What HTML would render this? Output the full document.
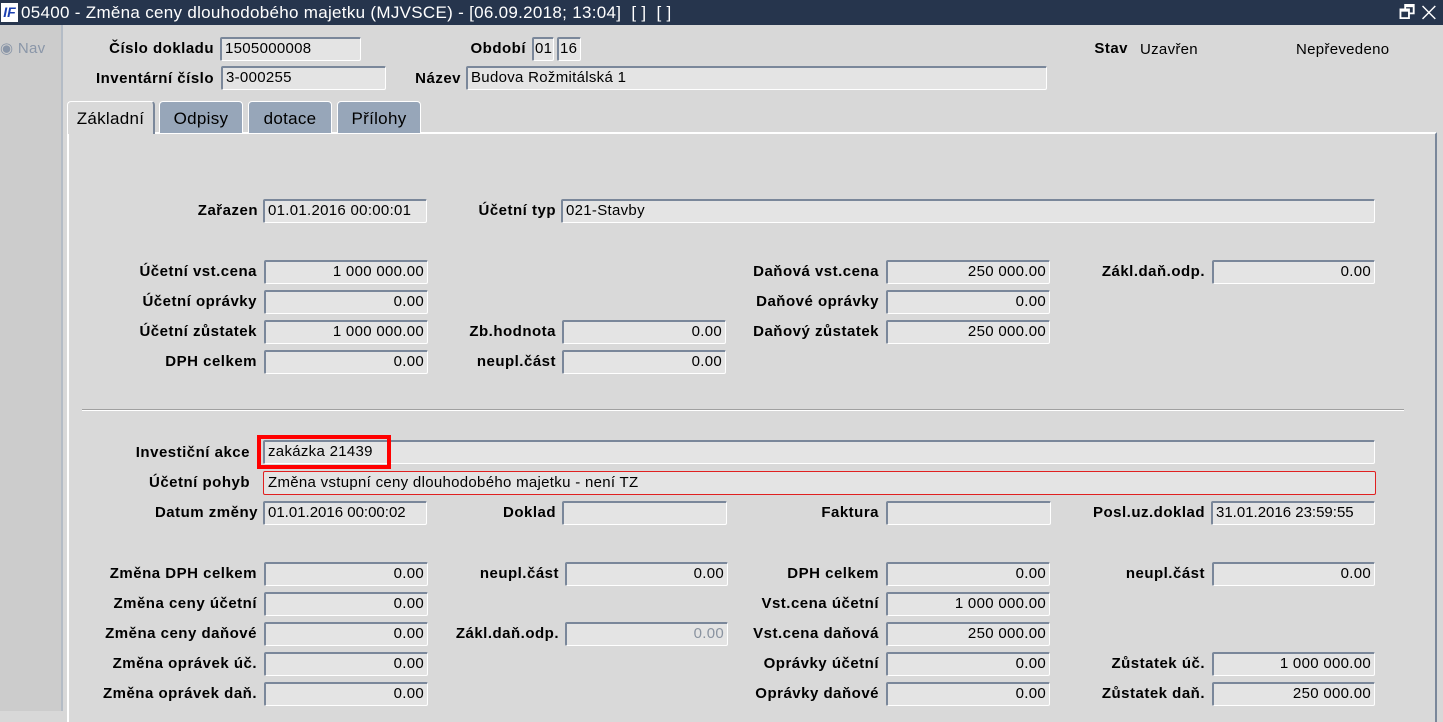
<!DOCTYPE html>
<html><head><meta charset="utf-8"><style>
*{margin:0;padding:0;box-sizing:border-box}
body{width:1443px;height:711px;overflow:hidden;background:#d8d8d8;font-family:"Liberation Sans",Arial,sans-serif;font-size:15px;letter-spacing:0.3px;color:#000;position:relative}
#tb{position:absolute;left:0;top:0;width:1443px;height:25px;background:#26354d;color:#fff;font-size:17px;letter-spacing:0.3px;line-height:25px;padding-left:21px}
#logo{position:absolute;left:1px;top:3px;width:17px;height:19px;background:#fff;color:#1a3fb0;font-weight:bold;font-style:italic;font-size:14px;line-height:19px;text-align:center;letter-spacing:0}
#strip{position:absolute;left:0;top:25px;width:63px;height:686px;background:#cccccc;border-right:2px solid #b4bcc6}
.l{position:absolute;width:220px;text-align:right;font-weight:bold;line-height:24px;white-space:nowrap;letter-spacing:0.5px}
.f{position:absolute;height:24px;background:#e4e4e4;border:1px solid #fff;border-top:2px solid #7a879a;border-left:2px solid #7a879a;line-height:20px;padding:0 3px;white-space:nowrap;overflow:hidden;border-radius:2px}
.r{text-align:right}
.t{position:absolute;top:101px;height:32px;background:#97a6b9;border-radius:4px 4px 0 0;text-align:center;line-height:34px;font-size:17px;border:1px solid #fff;border-bottom:none}
#panel{position:absolute;left:67px;top:132px;width:1370px;height:590px;background:#d9d9d9;border-top:2px solid #fff;border-left:2px solid #fff;border-right:2px solid #7a879a}
</style></head><body>
<div id="tb"><div id="logo">IF</div>05400 - Změna ceny dlouhodobého majetku (MJVSCE) - [06.09.2018; 13:04]&nbsp; [ ]&nbsp; [ ]<span style="position:absolute;right:6px;top:0;font-size:18px">🗗 ✕</span></div>
<div id="strip"><span style="position:absolute;left:0;top:14px;color:#8a96a8;font-size:15px">◉ Nav</span></div>

<div class="l" style="left:-6px;top:37px">Číslo dokladu</div>
<div class="f" style="left:220px;top:37px;width:141px">1505000008</div>
<div class="l" style="left:306px;top:37px">Období</div>
<div class="f" style="left:532px;top:37px;width:22px;padding:0 1px">01</div>
<div class="f" style="left:557px;top:37px;width:24px;padding:0 1px">16</div>
<div class="l" style="left:908px;top:37px">Stav</div>
<div style="position:absolute;left:1140px;top:41px">Uzavřen</div>
<div style="position:absolute;left:1296px;top:41px">Nepřevedeno</div>
<div class="l" style="left:-6px;top:67px">Inventární číslo</div>
<div class="f" style="left:221px;top:66px;width:165px">3-000255</div>
<div class="l" style="left:241px;top:67px">Název</div>
<div class="f" style="left:466px;top:66px;width:581px">Budova Rožmitálská 1</div>

<div id="panel"></div>
<div class="t" style="left:67px;width:88px;background:#d9d9d9;height:33px;border-right:2px solid #7a879a">Základní</div>
<div class="t" style="left:159px;width:84px">Odpisy</div>
<div class="t" style="left:248px;width:84px">dotace</div>
<div class="t" style="left:337px;width:84px">Přílohy</div>

<div class="l" style="left:38px;top:199px">Zařazen</div>
<div class="f" style="left:263px;top:199px;width:164px">01.01.2016 00:00:01</div>
<div class="l" style="left:336px;top:199px">Účetní typ</div>
<div class="f" style="left:561px;top:199px;width:814px">021-Stavby</div>

<div class="l" style="left:37px;top:260px">Účetní vst.cena</div>
<div class="f r" style="left:264px;top:260px;width:164px">1 000 000.00</div>
<div class="l" style="left:659px;top:260px">Daňová vst.cena</div>
<div class="f r" style="left:886px;top:260px;width:164px">250 000.00</div>
<div class="l" style="left:985px;top:260px">Zákl.daň.odp.</div>
<div class="f r" style="left:1212px;top:260px;width:163px">0.00</div>

<div class="l" style="left:37px;top:290px">Účetní oprávky</div>
<div class="f r" style="left:264px;top:290px;width:164px">0.00</div>
<div class="l" style="left:659px;top:290px">Daňové oprávky</div>
<div class="f r" style="left:886px;top:290px;width:164px">0.00</div>

<div class="l" style="left:37px;top:320px">Účetní zůstatek</div>
<div class="f r" style="left:264px;top:320px;width:164px">1 000 000.00</div>
<div class="l" style="left:336px;top:320px">Zb.hodnota</div>
<div class="f r" style="left:562px;top:320px;width:164px">0.00</div>
<div class="l" style="left:659px;top:320px">Daňový zůstatek</div>
<div class="f r" style="left:886px;top:320px;width:164px">250 000.00</div>

<div class="l" style="left:37px;top:350px">DPH celkem</div>
<div class="f r" style="left:264px;top:350px;width:164px">0.00</div>
<div class="l" style="left:336px;top:350px">neupl.část</div>
<div class="f r" style="left:562px;top:350px;width:164px">0.00</div>

<div style="position:absolute;left:82px;top:409px;width:1322px;height:2px;background:#a0a0a0;border-bottom:1px solid #fff"></div>

<div class="l" style="left:30px;top:441px">Investiční akce</div>
<div class="f" style="left:263px;top:440px;width:1112px;padding-left:3px">zakázka 21439</div>
<div style="position:absolute;left:257px;top:435px;width:134px;height:34px;border:4px solid #f00"></div>
<div class="l" style="left:30px;top:471px">Účetní pohyb</div>
<div class="f" style="left:263px;top:471px;width:1113px;border:1px solid #e02020;padding-left:4px;line-height:22px">Změna vstupní ceny dlouhodobého majetku - není TZ</div>

<div class="l" style="left:38px;top:501px">Datum změny</div>
<div class="f" style="left:263px;top:501px;width:164px;letter-spacing:0">01.01.2016 00:00:02</div>
<div class="l" style="left:336px;top:501px">Doklad</div>
<div class="f" style="left:562px;top:501px;width:165px"></div>
<div class="l" style="left:659px;top:501px">Faktura</div>
<div class="f" style="left:886px;top:501px;width:165px"></div>
<div class="l" style="left:985px;top:501px">Posl.uz.doklad</div>
<div class="f" style="left:1211px;top:501px;width:164px;letter-spacing:0">31.01.2016 23:59:55</div>

<div class="l" style="left:37px;top:562px">Změna DPH celkem</div>
<div class="f r" style="left:264px;top:562px;width:164px">0.00</div>
<div class="l" style="left:339px;top:562px">neupl.část</div>
<div class="f r" style="left:565px;top:562px;width:163px">0.00</div>
<div class="l" style="left:659px;top:562px">DPH celkem</div>
<div class="f r" style="left:886px;top:562px;width:164px">0.00</div>
<div class="l" style="left:985px;top:562px">neupl.část</div>
<div class="f r" style="left:1212px;top:562px;width:163px">0.00</div>

<div class="l" style="left:37px;top:592px">Změna ceny účetní</div>
<div class="f r" style="left:264px;top:592px;width:164px">0.00</div>
<div class="l" style="left:659px;top:592px">Vst.cena účetní</div>
<div class="f r" style="left:886px;top:592px;width:164px">1 000 000.00</div>

<div class="l" style="left:37px;top:622px">Změna ceny daňové</div>
<div class="f r" style="left:264px;top:622px;width:164px">0.00</div>
<div class="l" style="left:339px;top:622px">Zákl.daň.odp.</div>
<div class="f r" style="left:565px;top:622px;width:163px;color:#8a93a0">0.00</div>
<div class="l" style="left:659px;top:622px">Vst.cena daňová</div>
<div class="f r" style="left:886px;top:622px;width:164px">250 000.00</div>

<div class="l" style="left:37px;top:652px">Změna oprávek úč.</div>
<div class="f r" style="left:264px;top:652px;width:164px">0.00</div>
<div class="l" style="left:659px;top:652px">Oprávky účetní</div>
<div class="f r" style="left:886px;top:652px;width:164px">0.00</div>
<div class="l" style="left:985px;top:652px">Zůstatek úč.</div>
<div class="f r" style="left:1212px;top:652px;width:163px">1 000 000.00</div>

<div class="l" style="left:37px;top:682px">Změna oprávek daň.</div>
<div class="f r" style="left:264px;top:682px;width:164px">0.00</div>
<div class="l" style="left:659px;top:682px">Oprávky daňové</div>
<div class="f r" style="left:886px;top:682px;width:164px">0.00</div>
<div class="l" style="left:985px;top:682px">Zůstatek daň.</div>
<div class="f r" style="left:1212px;top:682px;width:163px">250 000.00</div>
</body></html>
